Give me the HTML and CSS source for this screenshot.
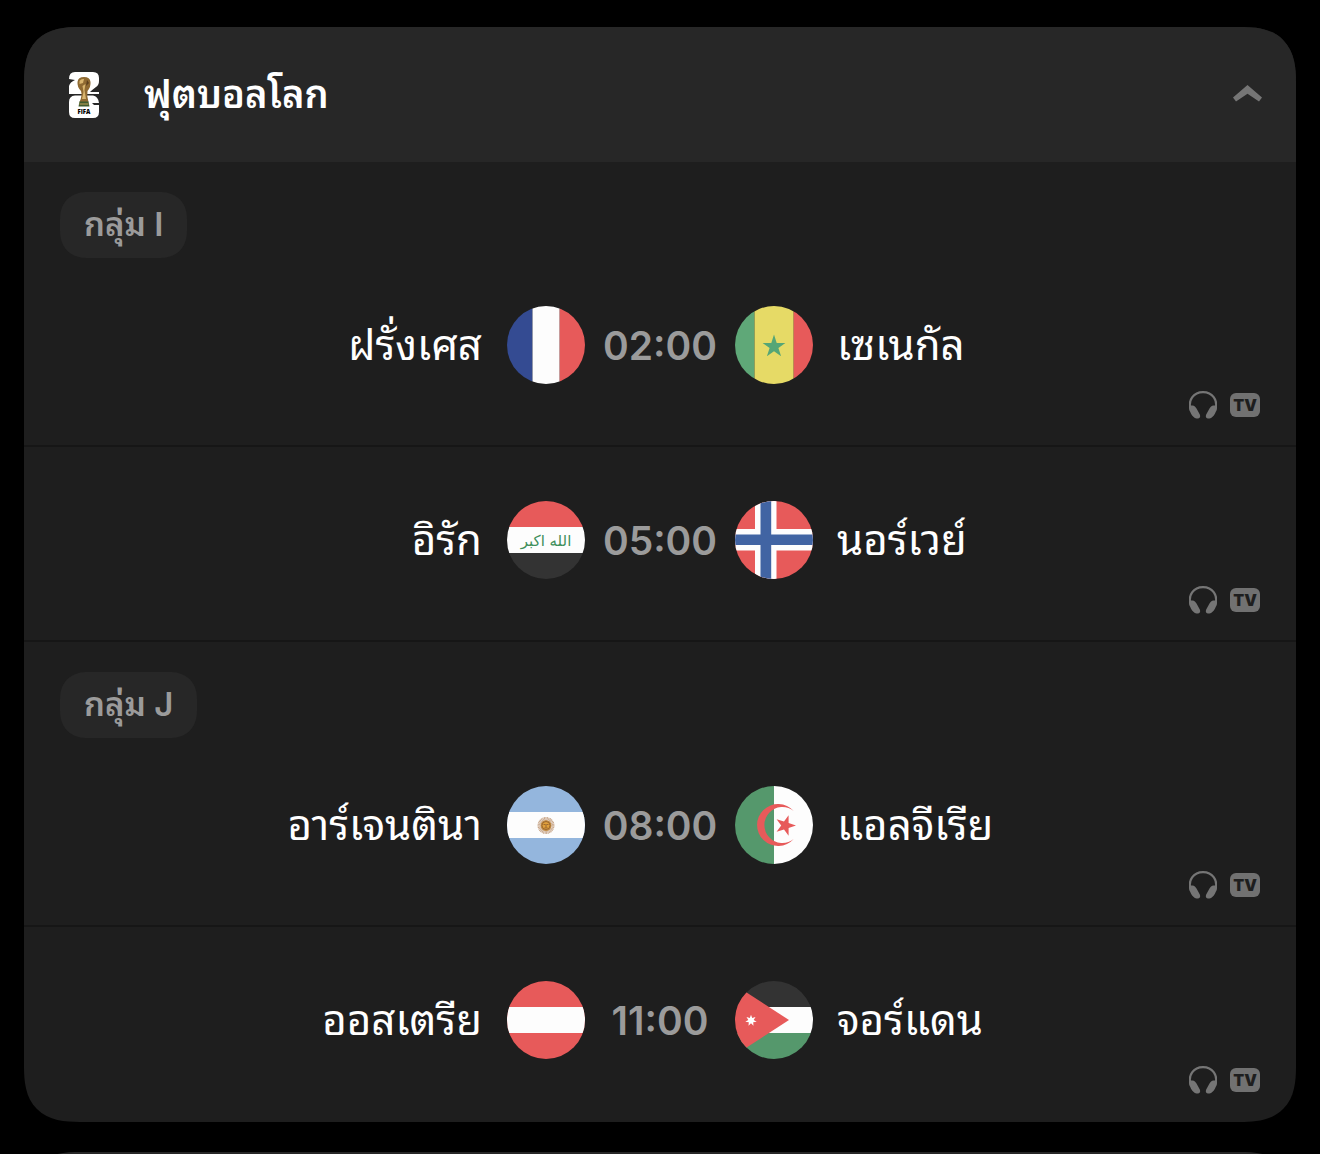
FILE: index.html
```html
<!DOCTYPE html>
<html lang="th">

<head>
    <meta charset="utf-8">
    <meta name="viewport" content="width=device-width, initial-scale=1">
    <title>ฟุตบอลโลก</title>
    <link rel="stylesheet" href="styles.css">
</head>

<body>
<svg class="sprite" aria-hidden="true">
    <symbol id="headphones" viewBox="0 0 28 28">
        <path d="M2 20C-2 9 5 1.200 14 1.200S30 9 26 20" fill="none" stroke="currentColor" stroke-width="2.200"/>
        <path d="M0 14.500H2.500C5 14 6.500 15.500 7.500 17.500L10.800 23.500C12 26.500 10 28 7.500 27.500C3 26.500 0 20 0 14.500Z" fill="currentColor"/>
        <path d="M28 14.500H25.500C23 14 21.500 15.500 20.500 17.500L17.200 23.500C16 26.500 18 28 20.500 27.500C25 26.500 28 20 28 14.500Z" fill="currentColor"/>
    </symbol>
</svg>

<main>
    <section class="card">
        <header class="card-header">
            <svg class="logo" viewBox="0 0 30 46" role="img" aria-label="FIFA 26">
                <path d="M6 0H24Q30 0 30 6V9Q30 13 27 15Q23 18 21 20H30V22H0V14Q1 10 6 8L0 7Q0 0 6 0Z" fill="#fff"/>
                <path d="M6 23.500H24Q29 24 30 31H23L25 33H30V40Q30 46 24 46H6Q0 46 0 40V30Q0 24 6 23.500Z" fill="#fff"/>
                <path d="M8.500 10Q9 5 15 5T21.500 10Q22 15 18.500 19Q17.500 24 19.500 30H10.500Q13.500 24 12 19Q8 15 8.500 10Z" fill="#8f6a32"/>
                <path d="M10.500 9Q12 6.500 15 7L14 11L10.500 12ZM13.500 14L16.500 12L15.500 18L17 27H13L14.500 20Z" fill="#d9b56e"/>
                <path d="M18 8L20 11L17 14Z" fill="#5c3f1d"/>
                <path d="M10.500 29.500H19.500L20.500 34.500H9.500Z" fill="#3f5a2c"/>
                <path d="M10.500 31.500H19.500V32.500H10.500Z" fill="#c6a45c"/>
                <text x="15" y="42" text-anchor="middle" class="logo-text">FIFA</text>
            </svg>
            <h1>ฟุตบอลโลก</h1>
            <button type="button" class="collapse" aria-label="ย่อ">
                <svg viewBox="0 0 30 17"><path d="M15.500 0L30 12.500L27 16.500L15.500 8.700L4 16.500L1 12.500Z" fill="currentColor"/></svg>
            </button>
        </header>

        <h2 class="group">กลุ่ม I</h2>
        <article class="match">
            <div class="teams">
                <span class="team home">ฝรั่งเศส</span>
                <svg class="flag" viewBox="0 0 78 78">
                    <path fill="#344b92" d="M0 0H25.500V78H0Z"/>
                    <path fill="#fdfdfd" d="M25.500 0H52.700V78H25.500Z"/>
                    <path fill="#e75a5a" d="M52.700 0H78V78H52.700Z"/>
                </svg>
                <time>02:00</time>
                <svg class="flag" viewBox="0 0 78 78">
                    <path fill="#5fa878" d="M0 0H19.500V78H0Z"/>
                    <path fill="#e6da66" d="M19.500 0H58.700V78H19.500Z"/>
                    <path fill="#e75a5a" d="M58.700 0H78V78H58.700Z"/>
                    <polygon fill="#55a676" points="39,28.6 41.7,36.9 50.4,36.9 43.4,42 46.1,50.3 39,45.2 31.9,50.3 34.6,42 27.6,36.9 36.3,36.9"/>
                </svg>
                <span class="team">เซเนกัล</span>
            </div>
            <div class="media">
                <svg class="audio"><use href="#headphones"/></svg>
                <span class="tv">TV</span>
            </div>
        </article>

        <article class="match">
            <div class="teams">
                <span class="team home">อิรัก</span>
                <svg class="flag" viewBox="0 0 78 78">
                    <path fill="#e75a5a" d="M0 0H78V26H0Z"/>
                    <path fill="#fdfdfd" d="M0 26H78V52H0Z"/>
                    <path fill="#333" d="M0 52H78V78H0Z"/>
                    <text x="39" y="45" text-anchor="middle" class="takbir">الله اكبر</text>
                </svg>
                <time>05:00</time>
                <svg class="flag" viewBox="0 0 78 78">
                    <path fill="#e75a5a" d="M0 0H78V78H0Z"/>
                    <path fill="#fdfdfd" d="M20 0H41.500V78H20ZM0 28H78V49.500H0Z"/>
                    <path fill="#4164a3" d="M25.500 0H36.200V78H25.500ZM0 33.500H78V44H0Z"/>
                </svg>
                <span class="team">นอร์เวย์</span>
            </div>
            <div class="media">
                <svg class="audio"><use href="#headphones"/></svg>
                <span class="tv">TV</span>
            </div>
        </article>

        <h2 class="group">กลุ่ม J</h2>
        <article class="match">
            <div class="teams">
                <span class="team home">อาร์เจนตินา</span>
                <svg class="flag" viewBox="0 0 78 78">
                    <path fill="#94b6dd" d="M0 0H78V78H0Z"/>
                    <path fill="#fdfdfd" d="M0 26H78V52H0Z"/>
                    <circle cx="39" cy="39.500" r="7" fill="none" stroke="#c9a88c" stroke-width="3" stroke-dasharray="1 .4"/>
                    <circle cx="39" cy="39.500" r="5.500" fill="#c08a45"/>
                    <circle cx="39" cy="39.500" r="4" fill="#e0a03c" stroke="#8c5a2c" stroke-width=".8"/>
                    <path d="M36.500 38.500H38.500M39.500 38.500H41.500M39 38.500V41M37.500 41.800H40.500" stroke="#8c5a2c" stroke-width=".8"/>
                </svg>
                <time>08:00</time>
                <svg class="flag" viewBox="0 0 78 78">
                    <path fill="#55986c" d="M0 0H39V78H0Z"/>
                    <path fill="#fdfdfd" d="M39 0H78V78H39Z"/>
                    <path fill="#e75a5a" d="M58.700 25A21 21 0 1 0 58.700 53A18 18 0 1 1 58.700 25Z"/>
                    <polygon fill="#e75a5a" points="61,39.5 53.6,41.9 53.6,49.7 49,43.4 41.6,45.8 46.2,39.5 41.6,33.2 49,35.6 53.6,29.3 53.6,37.1"/>
                </svg>
                <span class="team">แอลจีเรีย</span>
            </div>
            <div class="media">
                <svg class="audio"><use href="#headphones"/></svg>
                <span class="tv">TV</span>
            </div>
        </article>

        <article class="match">
            <div class="teams">
                <span class="team home">ออสเตรีย</span>
                <svg class="flag" viewBox="0 0 78 78">
                    <path fill="#e75a5a" d="M0 0H78V78H0Z"/>
                    <path fill="#fdfdfd" d="M0 26H78V52H0Z"/>
                </svg>
                <time>11:00</time>
                <svg class="flag" viewBox="0 0 78 78">
                    <path fill="#333" d="M0 0H78V26H0Z"/>
                    <path fill="#fdfdfd" d="M30 26H78V52H30Z"/>
                    <path fill="#55986c" d="M0 52H78V78H0Z"/>
                    <path fill="#e75a5a" d="M0 4L54 39L0 74Z"/>
                    <polygon fill="#fff" points="16,33.7 17.2,37 20.5,35.9 18.7,38.9 21.7,40.8 18.2,41.2 18.5,44.7 16,42.3 13.5,44.7 13.8,41.2 10.3,40.8 13.3,38.9 11.5,35.9 14.8,37"/>
                </svg>
                <span class="team">จอร์แดน</span>
            </div>
            <div class="media">
                <svg class="audio"><use href="#headphones"/></svg>
                <span class="tv">TV</span>
            </div>
        </article>
    </section>

    <section class="card">
        <header class="card-header"></header>
    </section>
</main>
</body>

</html>
```
FILE: styles.css
```css
* {
    box-sizing: border-box;
}

body {
    margin: 0;
    background: #000;
    color: #fff;
    font-family: Inter, "Noto Sans Thai Looped", Loma, Garuda, Waree, sans-serif;
}

.sprite {
    display: none;
}

main {
    display: flex;
    flex-direction: column;
    gap: 30px;
    height: 100vh;
    padding: 27px 24px 0;
    overflow: hidden;
}

.card {
    flex-shrink: 0;
    overflow: hidden;
    border-radius: 56px;
    corner-shape: superellipse(1.4);
    background: #1e1e1e;
}

.card-header {
    display: flex;
    align-items: center;
    height: 135px;
    padding: 0 34px 0 45px;
    background: #272727;
}

.logo {
    width: 30px;
    height: 46px;
    margin-right: 45px;
}

.logo-text {
    font: 900 6px "Open Sans", sans-serif;
    fill: #000;
}

h1 {
    margin: 0;
    padding-bottom: 2px;
    font-size: 38px;
    font-weight: 600;
    line-height: 60px;
}

.collapse {
    display: flex;
    margin-left: auto;
    padding: 0 0 2px;
    border: 0;
    background: none;
    color: #757575;
    cursor: pointer;
}

.collapse svg {
    width: 30px;
    height: 17px;
}

/* Группа */
.group {
    width: fit-content;
    height: 66px;
    margin: 30px 36px 0;
    padding: 0 24px;
    border-radius: 28px;
    corner-shape: superellipse(1.2);
    background: #272727;
    color: #9b9b9b;
    font-size: 33px;
    font-weight: 600;
    line-height: 64px;
}

.match {
    padding: 54px 36px 26px;
    border-bottom: 2px solid #161616;
}

.group + .match {
    padding-top: 48px;
}

.match:last-child {
    border-color: transparent;
}

.teams {
    display: grid;
    grid-template-columns: 1fr 78px 150px 78px 1fr;
    align-items: center;
    height: 78px;
}

.team {
    padding: 0 24px;
    font-size: 42px;
    line-height: 78px;
    white-space: nowrap;
}

.home {
    padding-right: 25px;
    text-align: right;
}

.flag {
    width: 78px;
    height: 78px;
    border-radius: 50%;
}

.takbir {
    font: 15px "DejaVu Sans", sans-serif;
    fill: #3f8f5a;
}

time {
    color: #9b9b9b;
    font-size: 39px;
    font-weight: 600;
    text-align: center;
}

.media {
    display: flex;
    justify-content: flex-end;
    align-items: center;
    gap: 13px;
    height: 28px;
    margin-top: 7px;
    color: #757575;
}

.audio {
    width: 28px;
    height: 28px;
}

.tv {
    width: 30px;
    height: 24px;
    border-radius: 6px;
    background: #717171;
    color: #1e1e1e;
    font: 900 16px/24px Inter, sans-serif;
    text-align: center;
}
```
